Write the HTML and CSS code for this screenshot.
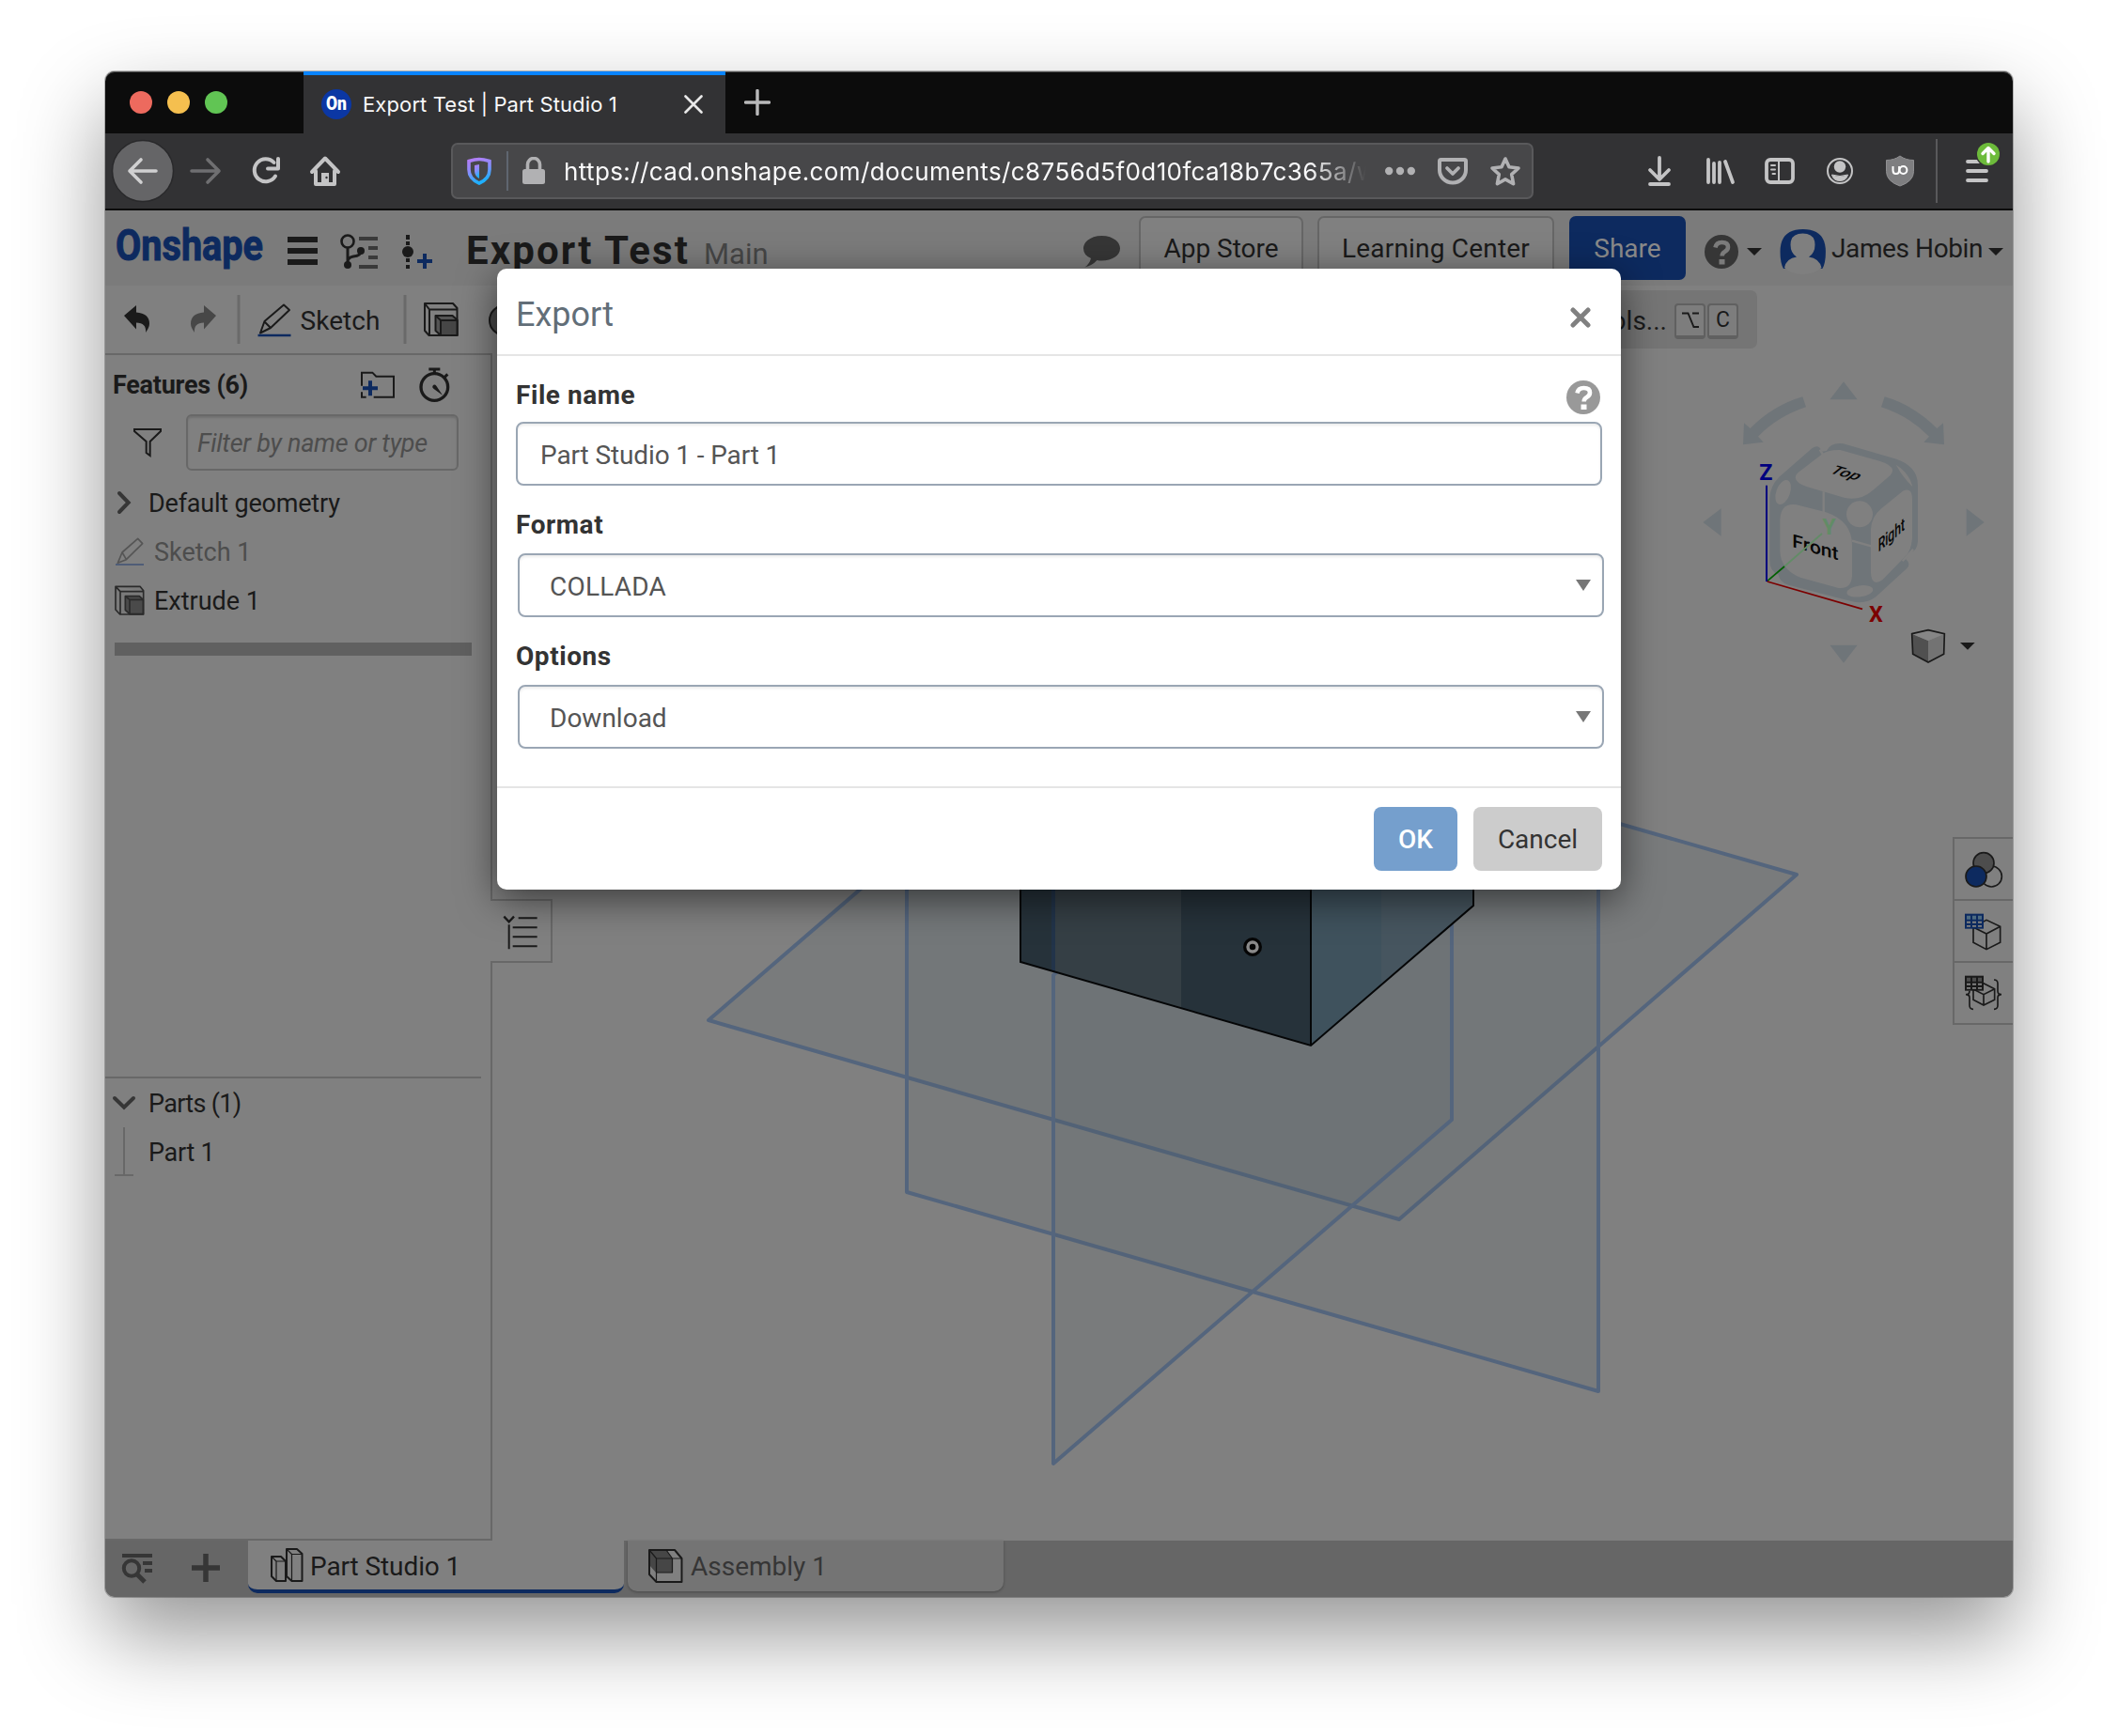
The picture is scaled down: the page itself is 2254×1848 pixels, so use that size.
FILE: index.html
```html
<!DOCTYPE html>
<html lang="en">
<head>
<meta charset="utf-8">
<title>Export Test | Part Studio 1</title>
<link rel="stylesheet" href="styles.css">
</head>
<body>
<div class="window">
  <div class="tabstrip">
    <div class="lights"><i class="red"></i><i class="yellow"></i><i class="green"></i></div>
    <div class="btab">
      <svg width="32" height="32" viewBox="0 0 32 32"><circle cx="16" cy="16" r="16" fill="#0b37a4"/><text x="5" y="22" class="fav" textLength="22" lengthAdjust="spacingAndGlyphs">On</text></svg>
      <span class="btab-title">Export Test | Part Studio 1</span>
      <svg class="btab-close" width="20" height="20" viewBox="0 0 20 20"><path d="M1.5 1.5l17 17M18.500 1.5l-17 17" stroke="#e8e8e8" stroke-width="2.6" stroke-linecap="round"/></svg>
    </div>
    <svg class="newtab" width="28" height="28" viewBox="0 0 28 28"><path d="M14 1.5v25M1.5 14h25" stroke="#b9b9ba" stroke-width="3.4" stroke-linecap="round"/></svg>
  </div>

  <div class="navbar">
    <svg class="back" width="68" height="68" viewBox="118 148 68 68"><circle cx="152" cy="182" r="32.5" fill="#656567" stroke="#29292b" stroke-width="1.5"/><path d="M150 170l-12 12 12 12M138 182h28" fill="none" stroke="#d0d0d1" stroke-width="3.6" stroke-linecap="round" stroke-linejoin="round"/></svg>
    <svg class="fwd" width="34" height="34" viewBox="202 165 34 34"><path d="M221 170l12 12-12 12M233 182h-29" fill="none" stroke="#6f6f71" stroke-width="3.6" stroke-linecap="round" stroke-linejoin="round"/></svg>
    <svg class="reload" width="34" height="34" viewBox="267 165 34 34"><path d="M294 187.500A12 12 0 1 1 292.500 173" fill="none" stroke="#c4c4c5" stroke-width="4" stroke-linecap="round"/><path d="M297 169v10.500h-11" fill="none" stroke="#c4c4c5" stroke-width="4" stroke-linecap="round" stroke-linejoin="round"/></svg>
    <svg class="home" width="34" height="34" viewBox="329 165 34 34"><path d="M332 183l14-14.500 14 14.500M336 182v14h20v-14" fill="none" stroke="#c4c4c5" stroke-width="4" stroke-linecap="round" stroke-linejoin="round"/><path d="M342 196v-12h8v12" fill="#c4c4c5"/><circle cx="347.500" cy="189" r="1.200" fill="#323234"/></svg>
    <div class="urlbar">
      <svg width="26" height="30" viewBox="497 167 26 30"><defs><linearGradient id="sh" x1="0" y1="0" x2="0.300" y2="1"><stop offset="0" stop-color="#b57cf5"/><stop offset="0.500" stop-color="#8a8dfb"/><stop offset="1" stop-color="#1fb0ff"/></linearGradient></defs><path d="M510 169.500c4 0 7 .8 11 2v9c0 7-4 11.500-11 14.500-7-3-11-7.500-11-14.500v-9c4-1.200 7-2 11-2z" fill="none" stroke="url(#sh)" stroke-width="3.600"/><path d="M510 175v15c-3.500-2-5-4.500-5-8.500v-5.500z" fill="url(#sh)"/></svg>
      <i class="urlsep"></i>
      <svg width="24" height="30" viewBox="556 167 24 30"><path d="M561.500 181v-6a6.500 6.500 0 0 1 13 0v6" fill="none" stroke="#b1b1b3" stroke-width="3.600"/><rect x="556" y="180" width="24" height="16" rx="2.500" fill="#b1b1b3"/></svg>
      <span class="url">https://cad.onshape.com/documents/c8756d5f0d10fca18b7c365a/w</span>
      <svg width="32" height="10" viewBox="0 0 32 10"><g fill="#b1b1b3"><circle cx="4.200" cy="5" r="4.200"/><circle cx="16" cy="5" r="4.200"/><circle cx="27.800" cy="5" r="4.200"/></g></svg>
      <svg class="pocket" width="32" height="30" viewBox="1530 167 32 30"><path d="M1533.500 170h25q1.500 0 1.500 1.500v9.500a14 13.500 0 0 1-28 0v-9.500q0-1.500 1.500-1.500z" fill="none" stroke="#b1b1b3" stroke-width="4"/><path d="M1540 179l6 6 6-6" fill="none" stroke="#b1b1b3" stroke-width="3.800" stroke-linecap="round" stroke-linejoin="round"/></svg>
      <svg class="star" width="34" height="34" viewBox="1585 165 34 34"><path d="M1602 169l4 8.800 10 1.200-7.300 6.700 1.900 10-8.600-4.800-8.600 4.800 1.900-10-7.300-6.700 10-1.200z" fill="none" stroke="#b1b1b3" stroke-width="3.600" stroke-linejoin="round"/></svg>
    </div>
    <svg class="tools" width="380" height="72" viewBox="1750 146 380 72">
      <g fill="none" stroke="#c4c4c5" stroke-width="3.800" stroke-linecap="round" stroke-linejoin="round">
        <path d="M1766 168v22M1756 181l10 10 10-10M1756 196h20"/>
        <path d="M1818 170v24M1824 174v20M1830 173v21M1836 172l8 22"/>
        <rect x="1880" y="170" width="28" height="24" rx="4"/>
        <path d="M1893 170v24M1885 176h4M1885 180.500h4M1886.500 185h2.500" stroke-width="2"/>
        <circle cx="1958" cy="182" r="13" stroke-width="2"/>
        <path d="M2094 172h20M2094 182h20M2094 192h20"/>
      </g>
      <circle cx="1958" cy="177.500" r="6.200" fill="#c4c4c5"/><path d="M1949.500 186q8.500 3 17 0-1.500 6.500-8.500 6.500t-8.500-6.500z" fill="#c4c4c5" stroke="#c4c4c5"/>
      <path d="M2022 166q6 4.500 14.500 4.500v12q0 10.500-14.500 15.500-14.500-5-14.500-15.500v-12q8.500 0 14.500-4.500z" fill="#7e7e80" stroke="#909092"/>
      <path d="M2014.500 177v4.500q0 3.500 3.300 3.500t3.300-3.500v-4.500" fill="none" stroke="#fff" stroke-width="2"/><circle cx="2025.500" cy="181" r="3.900" fill="none" stroke="#fff" stroke-width="2"/>
      <path d="M2061 148v68" stroke="#59595b" stroke-width="2"/>
      <circle cx="2116" cy="164" r="13.500" fill="#323234"/><circle cx="2116" cy="164" r="12" fill="#6dbb3b"/>
      <path d="M2116 172v-14M2110 163.500l6-6 6 6" fill="none" stroke="#fff" stroke-width="3.400" stroke-linecap="round" stroke-linejoin="round"/>
    </svg>
  </div>

  <div class="app">
    <div class="header">
      <svg class="logo" width="160" height="58" viewBox="122 236 160 58"><text x="123" y="276.500" class="logo-text" textLength="157" lengthAdjust="spacingAndGlyphs">Onshape</text></svg>
      <svg class="burger" width="32" height="36" viewBox="306 250 32 36"><path d="M306 255h32M306 267h32M306 279h32" stroke="#1a1a1a" stroke-width="6"/></svg>
      <svg class="branch" width="42" height="38" viewBox="361 249 42 38"><circle cx="370" cy="257" r="6.500" fill="none" stroke="#1a1a1a" stroke-width="2.600"/><path d="M370 264v18M370 279q0-5 6-6 8-1 8-5" fill="none" stroke="#1a1a1a" stroke-width="3"/><circle cx="384" cy="267" r="4" fill="#1a1a1a"/><circle cx="370" cy="282" r="4" fill="#1a1a1a"/><path d="M382 254h20M392 264h10M392 274h10M382 284h20" stroke="#3a3a3a" stroke-width="4"/></svg>
      <svg class="insert" width="34" height="38" viewBox="427 249 34 38"><path d="M434 250v5M434 257v4M434 275v4M434 282v4" stroke="#1a1a1a" stroke-width="4"/><circle cx="434" cy="268" r="6" fill="#1a1a1a"/><path d="M452 270v16M444 278h16" stroke="#0d2a5f" stroke-width="4"/></svg>
      <span class="doc">Export Test</span><span class="branchname">Main</span>
      <svg class="chat" width="40" height="36" viewBox="1153 250 40 36"><path d="M1172.500 251c11 0 19.500 6 19.500 13.500s-8.500 13-19.500 13q-3 0-5-.5-5 5.500-13 7.500 5-3.500 6.500-9.500-8-3.500-8-10.500c0-7.500 8.500-13.500 19.500-13.500z" fill="#363636"/></svg>
      <span class="btn appstore">App Store</span>
      <span class="btn learning">Learning Center</span>
      <span class="btn share">Share</span>
      <svg class="help" width="36" height="36" viewBox="0 0 36 36"><circle cx="18" cy="18" r="18" fill="#363636"/><path d="M11.500 13.500q1-5.500 7-5.500 6.500 0 6.500 5 0 3-3.500 5-2.800 1.500-2.800 4.500" fill="none" stroke="#7b7b7b" stroke-width="4.600"/><rect x="15.500" y="26" width="6" height="5.500" fill="#7b7b7b"/></svg>
      <i class="caret c1"></i>
      <svg class="avatar" width="49" height="50" viewBox="1893 243 49 50"><path d="M1897 286q-3.500-6-3.500-18 0-24 24.200-24t24.200 24q0 12-3.500 18z" fill="#0d2a5f"/><path d="M1898 285q2-10 13-11.500-6.500-4-6.500-13 0-12 13-12t13 12q0 9-6.500 13 11 1.500 13.500 11.500-8 7-20 7t-19.500-7z" fill="#7f7f7f"/></svg>
      <span class="user">James Hobin</span>
      <i class="caret c2"></i>
    </div>

    <div class="toolbar">
      <svg width="410" height="56" viewBox="124 312 410 56">
        <path d="M132 336l13-11v7.500q14 1 14 12 0 4-4 9.500 1-10.500-10-10.500v7z" fill="#1a1a1a"/>
        <path d="M230 336l-13-11v7.500q-14 1-14 12 0 4 4 9.500-1-10.500 10-10.500v7z" fill="#474747"/>
        <path d="M254 314v52M431 314v52" stroke="#6a6a6a" stroke-width="3"/>
        <path d="M277 354.500l4.500-12.500 20.500-17.500 6 5.500-20 19zM281.500 342.500l6.500 6.500" fill="none" stroke="#1a1a1a" stroke-width="2" stroke-linejoin="round"/><path d="M274.500 357h35" stroke="#0d2a5f" stroke-width="2.400"/>
        <text x="319.500" y="351" class="tb-text" textLength="85" lengthAdjust="spacing">Sketch</text>
        <g fill="none" stroke="#1a1a1a" stroke-width="2" stroke-linejoin="round"><path d="M452 323h30l4.500 5v29h-30l-4.500-5zM452 323l5 6.500h29M457 329.500v27"/><path d="M463.500 336h18l5 4.500v16.500h-17.500l-5.500-5z" fill="#555"/><path d="M463.500 336l5.500 5h17.500v16h-17.500v-16" fill="#464646"/></g>
        <circle cx="537" cy="341" r="16" fill="#484848" stroke="#1a1a1a" stroke-width="2"/>
      </svg>
      <div class="search"><span>Search tools...</span><kbd><svg width="20" height="20" viewBox="0 0 20 20"><path d="M1 2.500h6.500l6 14.500h5.500M12 2.500h7" fill="none" stroke="#1a1a1a" stroke-width="1.900"/></svg></kbd><kbd>C</kbd></div>
    </div>

    <div class="work">
      <div class="sidebar">
        <div class="side-head"><b>Features (6)</b>
          <svg class="folder" width="40" height="32" viewBox="846 76 120 96"><path d="M855 126V84h34l12 12h56v66h-64M855 146v16h14" fill="none" stroke="#1a1a1a" stroke-width="6"/><path d="M882 110v48M858 134h48" stroke="#0d2a5f" stroke-width="12"/></svg>
          <svg class="watch" width="34" height="38" viewBox="1034 66 102 114"><circle cx="1086" cy="129" r="43" fill="none" stroke="#1a1a1a" stroke-width="10"/><path d="M1068 72h36M1086 72v14M1116 100l12-12" stroke="#1a1a1a" stroke-width="9"/><path d="M1080 126q6-8 12-1l20 30-28-20q-6-4-4-9z" fill="#1a1a1a"/></svg>
        </div>
        <div class="side-filter">
          <svg width="32" height="32" viewBox="123 258 96 96"><path d="M129 264h84v6l-34 33v45l-12-9v-36l-38-33z" fill="none" stroke="#1a1a1a" stroke-width="6"/></svg>
          <span class="filter">Filter by name or type</span>
        </div>
        <div class="row r-def"><svg width="16" height="26" viewBox="72 456 48 78"><path d="M81 465l29 30-29 30" fill="none" stroke="#363636" stroke-width="12" stroke-linecap="round"/></svg><span>Default geometry</span></div>
        <div class="row feat dim"><svg width="32" height="32" viewBox="66 604 96 96"><path d="M76 689l14-34 50-44 15 16-52 51zM90 655l13 22" fill="none" stroke="#555" stroke-width="5" stroke-linejoin="round"/><path d="M69 694h90" stroke="#455675" stroke-width="5"/></svg><span class="t-sk">Sketch 1</span></div>
        <div class="row feat"><svg width="32" height="32" viewBox="66 759 96 96"><g stroke="#2a2a2a" stroke-width="5" stroke-linejoin="round" fill="none"><path d="M69 763h78l11 13v76H83l-14-15zM69 763l15 16h74M84 779v73" fill="#7a7a7a"/><path d="M100 794h45l12 11v46h-43l-14-13z" fill="#4a4a4a"/><path d="M100 794l14 11h43M114 805v46" /></g></svg><span class="t-ex">Extrude 1</span></div>
        <div class="rollback"></div>
        <div class="parts">
          <div class="row p-head"><svg width="26" height="16" viewBox="57 708 78 48"><path d="M66 717l30 29 30-29" fill="none" stroke="#363636" stroke-width="12" stroke-linecap="round"/></svg><span>Parts (1)</span></div>
          <div class="row p-item"><i class="tree"></i><span>Part 1</span></div>
        </div>
      </div>

      <div class="canvas">
        <svg class="scene" width="1618" height="1262" viewBox="524 378 1618 1262">
          <g fill="#4c5963" fill-opacity=".13" stroke="#54657d" stroke-width="4" stroke-linejoin="round">
            <path d="M754 1086L1178 720 1912 931 1489 1298z"/>
            <path d="M965 700L1701 910V1481L965 1269z"/>
            <path d="M1121 1038L1545 672V1192L1121 1558z"/>
          </g>
          <path d="M1086 700h309v413l-309-89z" fill="#26323a"/><path d="M1121 700h136v373l-136-39z" fill="#353f45"/>
          <path d="M1395 700h173v264l-173 149z" fill="#3f525d"/><path d="M1470 700h98v264l-98 84z" fill="#46555f"/>
          <path d="M1121 700v334" stroke="#22344a" stroke-width="4"/>
          <path d="M1086 700v324l309 89 173-149V700M1395 700v413" fill="none" stroke="#050607" stroke-width="2"/>
          <circle cx="1333" cy="1008" r="10" fill="#050505"/><circle cx="1333" cy="1008" r="5" fill="none" stroke="#8a8a8a" stroke-width="3.400"/>
        </svg>

        <svg class="viewcube" width="370" height="350" viewBox="0 0 1110 1050">
          <g fill="#6f7579">
            <path d="M502 136h88l-44-57zM502 920h88l-44 57zM97 528l58-44v88zM995 528l-57-44v88z"/>
            <path d="M415 127l11 33Q335 190 273 254l17 18-65 8 3-69 20 17Q320 155 415 127z"/>
            <path d="M677 127l-11 33Q757 190 819 254l-17 18 65 8-3-69-20 17Q772 155 677 127z"/>
            <path d="M310 450Q312 410 342 382L445 292Q467 276 476 302L491 300Q505 272 545 277L715 326Q783 350 783 410V590Q780 622 757 624L744 645Q762 660 748 675L650 765Q615 792 570 780L370 728Q340 718 338 695 310 685 310 650z"/>
          </g>
          <g fill="#808080">
            <path d="M400 370L475 312Q495 296 535 297L660 332Q720 350 695 378L640 425Q600 460 550 450L430 415Q375 395 400 370z"/>
            <path d="M343 520Q345 465 395 472L490 496Q573 525 573 600V700Q570 742 530 738L410 705Q345 680 343 620z"/>
            <path d="M633 550Q635 510 665 485L735 428Q765 415 765 455V580Q762 620 740 640L670 712Q635 735 633 690z"/>
            <circle cx="597" cy="502" r="42"/><ellipse cx="353" cy="432" rx="22" ry="41" transform="rotate(20 353 432)"/><ellipse cx="598" cy="748" rx="42" ry="18" transform="rotate(-8 598 748)"/>
            <path d="M713 344Q755 370 766 414 735 385 713 344z"/>
          </g>
          <path d="M482 430v68M573 587l61 17M470 296l14 22M768 614l-34 38" stroke="#808080" stroke-width="7"/>
          <text class="face" transform="matrix(1 .29 0 1 382 606)" textLength="148" lengthAdjust="spacingAndGlyphs">Front</text>
          <text class="face" transform="matrix(.72 -.62 0 1 656 624)" textLength="118" lengthAdjust="spacingAndGlyphs">Right</text>
          <text class="face" transform="matrix(.95 .27 -.68 .55 497 369)" textLength="94" lengthAdjust="spacingAndGlyphs">Top</text>
          <path d="M357 669l120-105" stroke="#628c66" stroke-width="5"/><path d="M302 716l55-47" stroke="#006000" stroke-width="5"/>
          <path d="M302 717l304 88" stroke="#7c0000" stroke-width="5"/><path d="M300 410v307" stroke="#00007e" stroke-width="6"/>
          <text class="ax" x="277" y="393" fill="#00007e">Z</text><text class="ax" x="478" y="567" fill="#628c66">Y</text><text class="ax" x="627" y="845" fill="#7c0000">X</text>
          <path d="M764 884l52 22v69l-49-26z" fill="#505050"/><path d="M868 884l-52 22v69l51-26z" fill="#737373"/><path d="M764 884l52-12 52 12-52 22z" fill="#868686"/>
          <path d="M764 884l52-12 52 12-2 65-50 26-49-26z" fill="none" stroke="#1a1a1a" stroke-width="5"/><path d="M918 912h47l-23 23z" fill="#1a1a1a"/>
        </svg>

        <div class="listtab"><svg width="38" height="38" viewBox="1306 134 114 114"><path d="M1310 139l16 17 16-17" fill="none" stroke="#1a1a1a" stroke-width="7"/><path d="M1326 165v78M1356 144h60M1338 174h78M1338 204h78M1338 234h78" stroke="#1a1a1a" stroke-width="6"/></svg></div>

        <div class="righttabs">
          <div><svg width="42" height="42" viewBox="150 108 126 126"><g stroke="#1a1a1a" stroke-width="5"><circle cx="238" cy="192" r="33" fill="#808080"/><circle cx="213" cy="149" r="33" fill="#4d4d4d"/><circle cx="189" cy="192" r="33" fill="#0d2a5f"/></g></svg></div>
          <div><svg width="42" height="42" viewBox="150 304 126 126"><path d="M180 352l42-23 44 21v51l-44 22-42-22zM180 352l42 21 44-23M222 373v50" fill="none" stroke="#1a1a1a" stroke-width="5"/><path d="M153 309h60v48h-60z" fill="#0d2a5f"/><path d="M159 315h12v12h-12zM177 315h12v12h-12zM195 315h12v12h-12z" fill="#4d6a80"/><path d="M159 333h12v6h-12zM177 333h12v6h-12zM195 333h12v6h-12zM159 346h12v5h-12zM177 346h12v5h-12zM195 346h12v5h-12z" fill="#808080"/></svg></div>
          <div><svg width="42" height="42" viewBox="150 502 126 126"><path d="M180 550l34-18 34 17v35l-35 17-33-17zM180 550l33 17 35-18M213 567v34" fill="none" stroke="#1a1a1a" stroke-width="5"/><path d="M180 614q-12 0-12-12v-25q0-10-12-10 12 0 12-12M246 520q12 0 12 12v25q0 10 12 10-12 0-12 10v25q0 12-12 12" fill="none" stroke="#1a1a1a" stroke-width="5"/><path d="M153 507h60v48h-60z" fill="#1a1a1a"/><path d="M159 513h12v12h-12zM177 513h12v12h-12zM195 513h12v12h-12z" fill="#4d4d4d"/><path d="M159 531h12v6h-12zM177 531h12v6h-12zM195 531h12v6h-12zM159 544h12v5h-12zM177 544h12v5h-12zM195 544h12v5h-12z" fill="#808080"/></svg></div>
        </div>
      </div>
    </div>

    <div class="footer">
      <svg class="f-icons" width="110" height="36" viewBox="128 1651 110 36"><path d="M130 1656h32M152 1664h10M154 1672h8" stroke="#363636" stroke-width="4"/><circle cx="140" cy="1669.500" r="8.200" fill="none" stroke="#363636" stroke-width="4"/><path d="M146 1676l8 8" stroke="#363636" stroke-width="5"/><path d="M219 1654v30M204 1669h30" stroke="#363636" stroke-width="5.500"/></svg>
      <div class="ftab active"><svg width="36" height="38" viewBox="287 1647 36 38"><g fill="none" stroke="#1a1a1a" stroke-width="2" stroke-linejoin="round"><path d="M289 1657h10l5 5v21h-10l-5-5z"/><path d="M289 1657l5 5h10M294 1662v21" stroke-width="1.200"/><path d="M305 1649h11l5.500 5v29h-11l-5.500-5z" fill="#808080"/><path d="M305 1649l5.500 5.500h11M310.500 1654.500v28" stroke-width="1.200"/></g></svg><span class="t-ps">Part Studio 1</span></div>
      <div class="ftab idle"><svg width="38" height="38" viewBox="689 1647 38 38"><path d="M691 1649h27l7.500 9v25h-27l-7.500-8z" fill="#808080"/><path d="M691 1649h18l7 9v15h-18l-7-8z" fill="#464646"/><g fill="none" stroke="#1a1a1a" stroke-width="2" stroke-linejoin="round"><path d="M691 1649h27l7.500 9v25h-27l-7.500-8z"/><path d="M691 1649l7.500 9h27M698.500 1658v25M709 1649l6.500 9v15h-17" stroke-width="1.200"/></g></svg><span class="t-as">Assembly 1</span></div>
    </div>
  </div>

  <div class="modal">
    <div class="m-head"><span class="m-title">Export</span><svg width="22" height="22" viewBox="0 0 22 22"><path d="M3 3l16 16M19 3L3 19" stroke="#808080" stroke-width="5" stroke-linecap="round"/></svg></div>
    <div class="m-body">
      <div class="label"><b class="l-file">File name</b><svg width="36" height="36" viewBox="0 0 36 36"><circle cx="18" cy="18" r="18" fill="#999"/><path d="M11.500 13.500q1-5.500 7-5.500 6.500 0 6.500 5 0 3-3.500 5-2.800 1.500-2.800 4.500" fill="none" stroke="#fff" stroke-width="4.600"/><rect x="15.500" y="25.500" width="6" height="5.500" fill="#fff"/></svg></div>
      <div class="field input"><span class="v-file">Part Studio 1 - Part 1</span></div>
      <div class="label l2"><b class="l-fmt">Format</b></div>
      <div class="field select"><span class="v-fmt">COLLADA</span><i></i></div>
      <div class="label l2"><b class="l-opt">Options</b></div>
      <div class="field select"><span class="v-opt">Download</span><i></i></div>
    </div>
    <div class="m-foot"><span class="ok">OK</span><span class="cancel">Cancel</span></div>
  </div>
</div>
</body>
</html>
```
FILE: styles.css
```css
* { box-sizing: border-box; }
body { margin: 0; width: 2254px; height: 1848px; overflow: hidden; background: #fff; padding: 76px 112px 148px; font-family: Roboto, "Liberation Sans", sans-serif; font-size: 27px; color: #1a1a1a; }
svg { display: block; flex: none; }
span, b { white-space: nowrap; }
.window { position: relative; width: 2030px; height: 1624px; display: flex; flex-direction: column; border-radius: 10px; box-shadow: 0 0 0 1px rgba(0,0,0,.25), 0 40px 90px rgba(0,0,0,.42); }

/* browser chrome */
.tabstrip { height: 66px; background: #0c0c0c; display: flex; align-items: center; border-radius: 10px 10px 0 0; box-shadow: inset 0 1px #555; }
.lights { display: flex; gap: 16px; padding-left: 26px; width: 211px; }
.lights i { width: 24px; height: 24px; border-radius: 50%; }
.red { background: #ed6a5e; } .yellow { background: #f5bf4f; } .green { background: #61c554; }
.btab { width: 449px; height: 66px; background: #323234; border-top: 4px solid #0a84ff; display: flex; align-items: center; padding: 0 24px 0 19px; font: 22px Inter, sans-serif; color: #f9f9fa; }
.btab-title { margin-left: 12px; flex: 1; letter-spacing: .12px; }
.fav { font: 900 20px Roboto, sans-serif; fill: #fff; }
.newtab { margin-left: 20px; }
.navbar { height: 82px; background: #323234; border-bottom: 2px solid #0c0c0c; display: flex; align-items: center; padding-left: 6px; }
.fwd { margin-left: 16px; } .reload { margin-left: 30px; } .home { margin-left: 29px; }
.urlbar { margin-left: 117px; width: 1152px; height: 60px; border: 2px solid #59595b; border-radius: 7px; background: #474749; display: flex; align-items: center; padding-left: 15px; }
.urlsep { width: 2px; height: 42px; background: #5f6670; margin: 0 15px 0 16px; }
.url { margin: 2px 20px 0 20px; width: 854px; overflow: hidden; font: 26px Inter, sans-serif; letter-spacing: .38px; color: #f9f9fa; line-height: 40px; -webkit-mask-image: linear-gradient(90deg, #000 93%, transparent); mask-image: linear-gradient(90deg, #000 93%, transparent); }
.pocket { margin-left: 24px; } .star { margin-left: 23px; }
.tools { margin-left: 118px; }

/* document header */
.app { flex: 1; background: #808080; display: flex; flex-direction: column; border-radius: 0 0 10px 10px; overflow: hidden; }
.header { height: 80px; background: #7b7b7b; display: flex; align-items: flex-start; padding: 6px 0 0 10px; }
.header > svg { margin-top: 20px; }
.header .logo { margin-top: 6px; overflow: visible; }
.logo-text { font: bold 46px Roboto, sans-serif; fill: #0d2a5f; stroke: #0d2a5f; stroke-width: 1px; }
.header .burger { margin-left: 24px; }
.header .branch { margin: 19px 0 0 23px; }
.header .insert { margin: 19px 0 0 24px; }
.doc { margin-left: 35px; width: 253px; font-size: 42px; font-weight: bold; line-height: 74px; letter-spacing: 2.1px; }
.branchname { width: 404px; font-size: 31px; line-height: 81px; color: #464646; }
.btn { height: 68px; line-height: 66px; border: 2px solid #666; border-radius: 7px; background: #808080; text-align: center; font-size: 28px; }
.appstore { width: 175px; margin-left: 19px; } .learning { width: 252px; margin-left: 15px; letter-spacing: .2px; }
.share { width: 124px; margin-left: 16px; background: #0d2a5f; border-color: #0d2a5f; color: #898989; }
.header .help { margin-left: 20px; }
.caret { width: 0; border: 8px solid transparent; border-top: 8px solid #1a1a1a; border-bottom: 0; margin-top: 34px; flex: none; }
.c1 { margin-left: 9px; }
.header .avatar { margin: 13px 0 0 19px; }
.user { margin-left: 6px; width: 160px; font-size: 28px; line-height: 70px; letter-spacing: -.4px; }
.c2 { margin-left: 7px; }

.toolbar { height: 72px; display: flex; align-items: center; padding: 0 272px 0 12px; justify-content: space-between; }
.tb-text { font: 28px Roboto, sans-serif; fill: #1a1a1a; }
.search { width: 420px; height: 62px; background: #757575; border-radius: 7px; display: flex; align-items: center; justify-content: flex-end; padding-right: 20px; font-size: 28px; }
.search span { padding-top: 2px; }
.search kbd { width: 33px; height: 38px; border: 2px solid #606060; border-bottom-width: 4px; border-radius: 4px; margin: 3px 0 0 2px; background: #7d7d7d; font: 23px/34px Roboto, sans-serif; display: flex; justify-content: center; align-items: center; }
.search kbd:first-of-type { margin-left: 8px; }

/* feature list */
.work { flex: 1; display: flex; position: relative; }
.sidebar { width: 412px; height: 1264px; border: 2px solid #686868; border-left: 0; display: flex; flex-direction: column; }
.side-head { height: 63px; display: flex; align-items: center; padding-left: 8px; }
.side-head b { width: 262px; letter-spacing: -.25px; padding-top: 1px; }
.watch { margin-left: 23px; }
.side-filter { display: flex; align-items: center; height: 60px; padding-left: 29px; margin-bottom: 8px; }
.filter { margin-left: 25px; width: 290px; height: 60px; border: 2px solid #686868; border-radius: 6px; padding-left: 10px; line-height: 59px; font-style: italic; color: #4d4d4d; box-shadow: inset 0 2px 2px rgba(0,0,0,.12); letter-spacing: -.28px; }
.row { height: 52px; display: flex; align-items: center; }
.row span { padding-top: 2px; }
.r-def { padding-left: 12px; } .r-def span { margin-left: 18px; letter-spacing: -.2px; }
.feat { padding-left: 10px; } .feat span { margin-left: 10px; }
.dim { color: #4d4d4d; }
.rollback { width: 380px; height: 14px; margin: 19px 0 0 10px; background: #606060; }
.parts { margin-top: 448px; width: 400px; border-top: 2px solid #686868; }
.p-head { padding-left: 7px; height: 52px; } .p-head span { margin-left: 13px; letter-spacing: -.7px; }
.p-item { padding-left: 10px; }
.tree { width: 20px; height: 52px; border-bottom: 2px solid #686868; background: linear-gradient(#686868, #686868) 9px 0/2px 100% no-repeat; }
.p-item span { margin-left: 16px; letter-spacing: -.3px; }

/* canvas */
.canvas { flex: 1; position: relative; }
.scene { position: absolute; left: 0; top: 2px; }
.viewcube { position: absolute; left: 1256px; top: 4px; }
.listtab { position: absolute; left: -2px; top: 581px; width: 66px; height: 68px; border: 2px solid #686868; border-left: 0; background: #808080; padding: 15px 0 0 13px; }
.righttabs { position: absolute; right: 0; top: 515px; width: 64px; border: 2px solid #686868; border-right: 0; }
.righttabs div { height: 66px; padding: 12px 0 0 10px; border-bottom: 2px solid #686868; }
.righttabs div:last-child { border: 0; height: 64px; }
.ax { font: bold 70px Roboto, sans-serif; }
.face { font: 500 58px Roboto, sans-serif; fill: #060606; }

/* document tabs */
.footer { height: 60px; background: #666; display: flex; }
.f-icons { margin: 11px 0 0 16px; }
.ftab { width: 400px; height: 54px; display: flex; align-items: center; border-radius: 0 0 10px 10px; font-size: 28px; }
.ftab span { padding-top: 1px; }
.active { margin-left: 26px; height: 56px; background: #808080; border-bottom: 4px solid #0d2a5f; padding-left: 23px; }
.active span { margin-left: 7px; letter-spacing: -.1px; padding-top: 2px; }
.idle { margin-left: 4px; background: #747474; color: #363636; padding-left: 21px; box-shadow: 0 1px 3px rgba(0,0,0,.3); }
.idle span { margin-left: 8px; }

/* export dialog */
.modal { position: absolute; left: 417px; top: 210px; width: 1196px; height: 661px; background: #fff; border-radius: 10px; box-shadow: 0 10px 40px rgba(0,0,0,.55); display: flex; flex-direction: column; color: #333; }
.m-head { height: 93px; border-bottom: 2px solid #e5e5e5; display: flex; justify-content: space-between; align-items: center; padding: 6px 32px 0 20px; }
.m-head svg { margin-top: 6px; }
.m-title { font-size: 36px; color: #626e78; }
.m-body { padding: 21px 18px 0 20px; flex: 1; }
.label { height: 40px; line-height: 42px; display: flex; justify-content: space-between; font-size: 28px; margin-bottom: 9px; letter-spacing: .55px; }
.label svg { margin: 5px 4px 0 0; }
.l2 { margin: 21px 0 11px; }
.field { width: 1156px; height: 68px; border: 2px solid #9aa6b4; border-radius: 8px; box-shadow: inset 0 2px 3px rgba(0,0,0,.08); display: flex; align-items: center; justify-content: space-between; font-size: 28px; color: #555; padding-left: 24px; }
.field span { padding-top: 2px; }
.v-file { letter-spacing: -.12px; }
.v-fmt { letter-spacing: .2px; }
.select { margin-left: 2px; padding: 0 12px 0 32px; }
.select i { border: 8px solid transparent; border-top: 12px solid #777; border-bottom: 0; margin-top: -1px; }
.m-foot { height: 110px; border-top: 2px solid #e5e5e5; display: flex; justify-content: flex-end; gap: 17px; padding: 20px 20px 0; font-size: 28px; line-height: 70px; text-align: center; }
.ok { width: 89px; height: 68px; border-radius: 8px; background: #759fcd; color: #fff; font-weight: 500; }
.cancel { width: 137px; height: 68px; border-radius: 8px; background: #ccc; }
```
